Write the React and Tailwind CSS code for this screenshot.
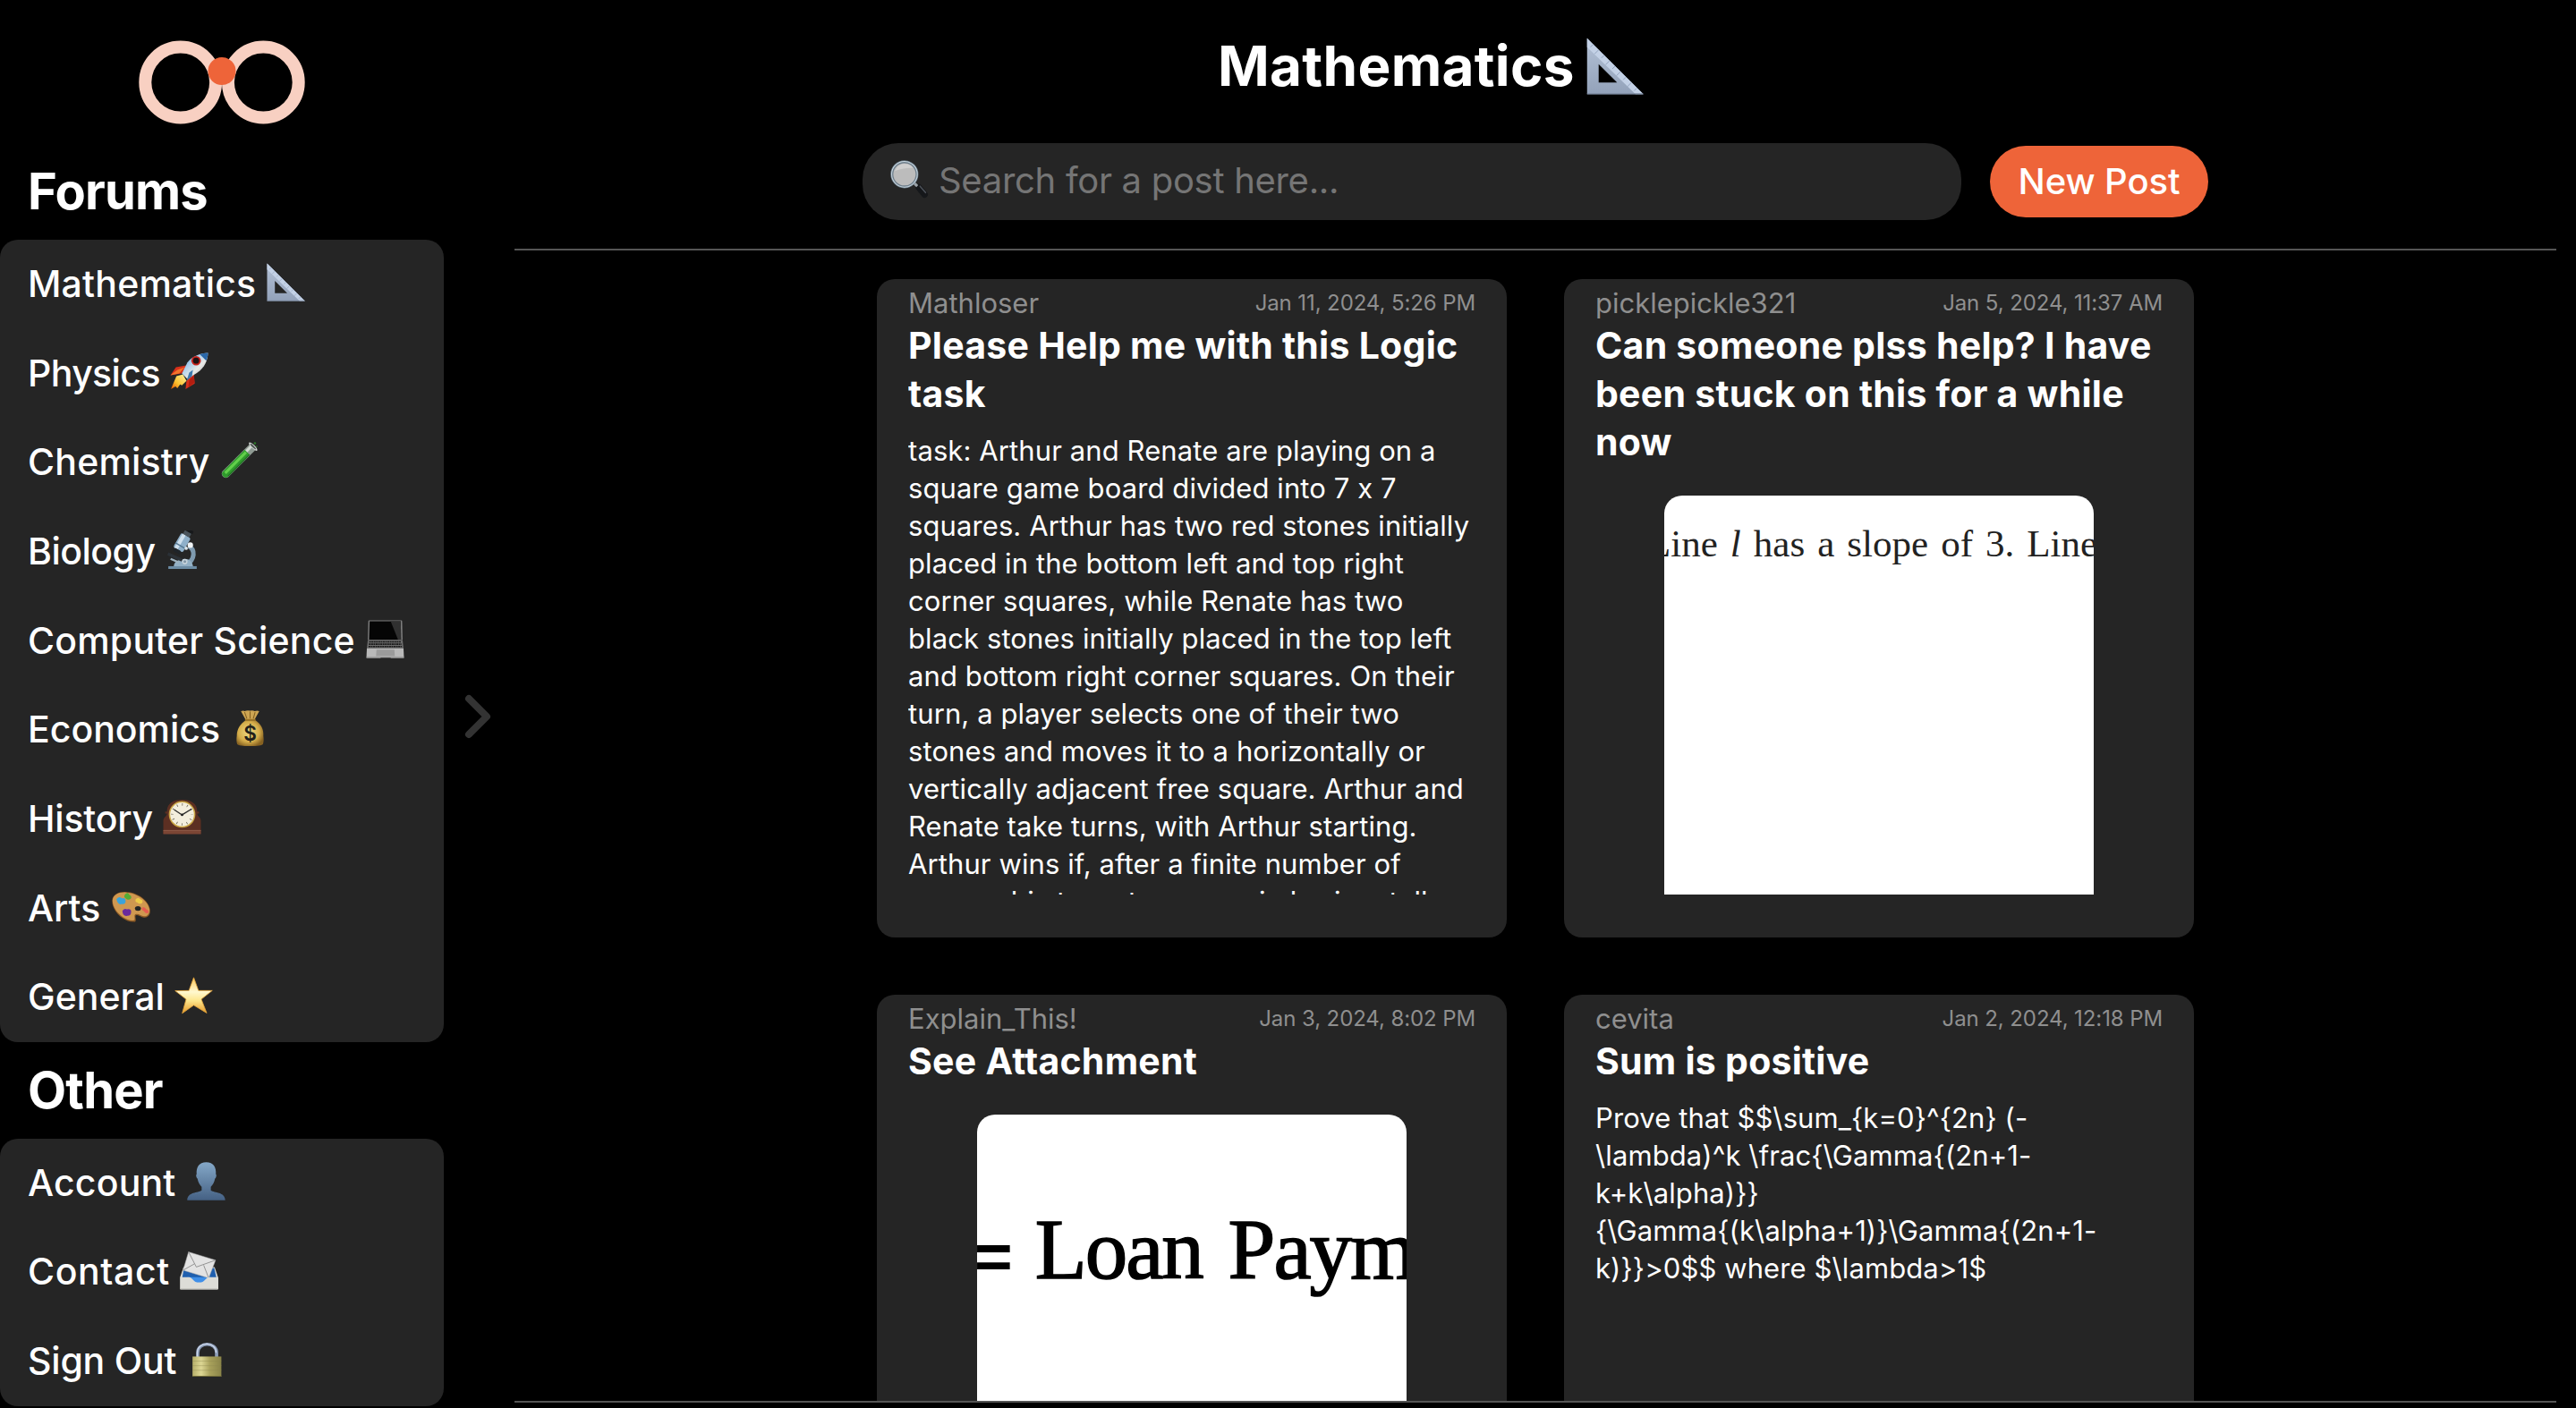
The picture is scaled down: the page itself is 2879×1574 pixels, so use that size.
const FORUMS = [
  { label: "Mathematics", icon: SetSquare, width: "w-[266px] tracking-[0.2px]" },
  { label: "Physics", icon: Rocket, width: "w-[158px] tracking-[-0.6px]" },
  { label: "Chemistry", icon: TestTube, width: "w-[214px] tracking-[0.2px]" },
  { label: "Biology", icon: Microscope, width: "w-[151px] tracking-[-0.5px]" },
  { label: "Computer Science", icon: Laptop, width: "w-[377px] tracking-[0.2px]" },
  { label: "Economics", icon: MoneyBag, width: "w-[226px] tracking-[0px]" },
  { label: "History", icon: MantelClock, width: "w-[150px] tracking-[-0.2px]" },
  { label: "Arts", icon: Palette, width: "w-[93px] tracking-[0px]" },
  { label: "General", icon: Star, width: "w-[163px] tracking-[0px]" },
];

const OTHER = [
  { label: "Account", icon: Bust, width: "w-[177px] tracking-[0.2px]" },
  { label: "Contact", icon: MailTray, width: "w-[169px] tracking-[0.6px]" },
  { label: "Sign Out", icon: Lock, width: "w-[177px] tracking-[-0.2px]" },
];

const LOGIC_TASK = [
  "task: Arthur and Renate are playing on a",
  "square game board divided into 7 x 7",
  "squares. Arthur has two red stones initially",
  "placed in the bottom left and top right",
  "corner squares, while Renate has two",
  "black stones initially placed in the top left",
  "and bottom right corner squares. On their",
  "turn, a player selects one of their two",
  "stones and moves it to a horizontally or",
  "vertically adjacent free square. Arthur and",
  "Renate take turns, with Arthur starting.",
  "Arthur wins if, after a finite number of",
  "moves, his two stones are in horizontally",
].join("\n");

const SUM_TASK = [
  "Prove that $$\\sum_{k=0}^{2n} (-",
  "\\lambda)^k \\frac{\\Gamma{(2n+1-",
  "k+k\\alpha)}}",
  "{\\Gamma{(k\\alpha+1)}\\Gamma{(2n+1-",
  "k)}}>0$$ where $\\lambda>1$",
].join("\n");

function Emoji({ className = "size-[43px]", children }) {
  return (
    <svg viewBox="0 0 42 42" className={`shrink-0 ${className}`} aria-hidden="true">
      {children}
    </svg>
  );
}

function SetSquare({ className }) {
  return (
    <Emoji className={className}>
      <defs>
        <linearGradient id="sq" x1="0" y1="0" x2="0" y2="1">
          <stop offset="0" stopColor="#b3c1d6" />
          <stop offset="1" stopColor="#93a2ba" />
        </linearGradient>
      </defs>
      <path fillRule="evenodd" fill="url(#sq)" d="M.5.5V41.5H41.8ZM9 19.5 22.5 33H9Z" />
      <path fill="#c3d1e6" d="M.5.5 41.8 41.5H36L.5 7Z" />
      <path
        stroke="#8fa0ba"
        strokeWidth=".6"
        d="M5 5l-2 2M9 9l-3 3M13 13l-2 2M17 17l-3 3M21 21l-2 2M25 25l-3 3M29 29l-2 2M33 33l-3 3M37 37l-2 2"
      />
      <path stroke="#7d8aa0" strokeWidth=".8" d="M.5 41.2H41.5" />
    </Emoji>
  );
}

function Rocket() {
  return (
    <Emoji>
      <defs>
        <linearGradient id="rk" x1="0" y1="0" x2="1" y2="1">
          <stop offset="0" stopColor="#2f78c4" />
          <stop offset=".35" stopColor="#a9cdec" />
          <stop offset=".6" stopColor="#e9e9e6" />
          <stop offset="1" stopColor="#7d8a98" />
        </linearGradient>
        <linearGradient id="rf" x1="1" y1="0" x2="0" y2="1">
          <stop offset="0" stopColor="#fff3a0" />
          <stop offset=".6" stopColor="#fbc02d" />
          <stop offset="1" stopColor="#e65100" />
        </linearGradient>
      </defs>
      <path fill="#d8301b" d="M.5 25 6.5 16 19 14 13 23Z" />
      <path fill="#f2742b" d="M.5 25 8 19l8-3-6 7Z" />
      <path fill="#d8301b" d="M17 40l1-9 8-8 1 11Z" />
      <path fill="#b31d10" d="M20 38l1-8 5-5 .8 8Z" />
      <path fill="url(#rf)" d="M1 40 7 26l7-2 4 7-5 5-2-1-3 4-2-2Z" />
      <path fill="url(#rk)" d="M41.5.5C34 .5 24 4 19 11l-6 12 6 6 11-7C38 16 41 9 41.5.5Z" />
      <path fill="#2a67a8" d="M41.5.5C38 .6 35 1.2 32.5 2l7 7C41 6 41.4 3 41.5.5Z" />
      <path fill="#3f79ad" d="M18 31l3-9 4-3-1 7Z" />
      <circle cx="28.5" cy="9" r="5.2" fill="#c8231c" />
      <circle cx="28.5" cy="9" r="3.3" fill="#1d1113" />
    </Emoji>
  );
}

function TestTube() {
  return (
    <Emoji>
      <g transform="translate(-2 1) rotate(45 21 21)">
        <path fill="#8e9a92" d="M16.500-3h9v42a4.500 4.500 0 0 1-9 0Z" />
        <path fill="#d3d9d4" d="M18-2h3v9h-3Z" />
        <path fill="#2f9a2c" d="M17 6h8v33a4 4 0 0 1-8 0Z" />
        <path fill="#62cf4b" d="M18.500 7h3v32h-3Z" />
        <path fill="#1d6b20" d="M24 6h1v33h-1Z" />
        <ellipse cx="21" cy="-3" rx="6.2" ry="2" fill="#c9cecb" />
        <ellipse cx="21" cy="-3" rx="4.2" ry="1" fill="#4d5550" />
      </g>
      <circle cx="38" cy="1.500" r="1.300" fill="#2e7a2b" />
      <circle cx="40" cy="5" r=".8" fill="#2e7a2b" />
    </Emoji>
  );
}

function Microscope() {
  return (
    <Emoji>
      <path fill="none" stroke="#7f9bb0" strokeWidth="5" d="M27 17c8 4 7 15-2 20" />
      <path fill="#6d8da5" d="M5 39h31v3H5Z" />
      <path fill="#93b0c5" d="M11 39c0-5 6-8 12-8 5 0 8 3 9 8Z" />
      <path fill="#2b3137" d="M5 24l16 7-1.500 3L4 27Z" />
      <path fill="#9eb2bf" d="M8 30l9 4-1 2-9-4Z" />
      <g transform="rotate(30 19 14)">
        <rect x="13.500" y="4" width="12" height="18" rx="2" fill="#8fb0ca" />
        <rect x="15" y="4" width="4" height="18" fill="#cfe0ed" />
        <rect x="13.500" y="16" width="12" height="1.500" fill="#557893" />
        <rect x="15.500" y="21.500" width="8" height="4" rx="1" fill="#1f2429" />
        <rect x="15.500" y="-1" width="8" height="5" fill="#4a545c" />
        <rect x="14.500" y="-4" width="10" height="3.500" rx="1" fill="#17191b" />
      </g>
      <circle cx="29" cy="16" r="3" fill="#f0f4f6" />
      <circle cx="24.500" cy="19.500" r="1.800" fill="#dce5ea" />
      <circle cx="23" cy="34" r="3" fill="#c7d3db" />
      <circle cx="23" cy="34" r="1.500" fill="#8298a8" />
    </Emoji>
  );
}

function Laptop() {
  return (
    <Emoji>
      <path fill="#7e7e7e" d="M3.500.5h35q1 0 1 1L40 22H2L2.600 1.500q0-1 .9-1Z" />
      <path fill="#050505" d="M4 1.500h34l.3 20H3.400Z" />
      <path fill="#303030" d="M27 1.500h11l.3 20H35Z" />
      <path fill="#6d6d6d" d="M2 22h38l1 9H1Z" />
      <path stroke="#191919" strokeWidth="1.500" strokeDasharray="2 .5" d="M3.500 24h35M3.200 26.500h35.600M2.800 29h36.400" />
      <path fill="#b9b9b9" d="M1 31h40l.5 10H.5Z" />
      <path fill="#9b9b9b" d="M11.500 32.500h19.500l.5 7H11Z" />
      <path fill="#858585" d="M.5 40.500h41V42H.5Z" />
      <path fill="#4a4a4a" d="M16 41h11v1H16Z" />
    </Emoji>
  );
}

function MoneyBag() {
  return (
    <Emoji>
      <defs>
        <radialGradient id="mb" cx=".45" cy=".45" r=".6">
          <stop offset="0" stopColor="#f0db84" />
          <stop offset=".65" stopColor="#d4ac49" />
          <stop offset="1" stopColor="#876221" />
        </radialGradient>
      </defs>
      <path fill="#cda553" d="M11 2q3-1 4 0 3-1.500 6-.5 3-1 5 .5 3-1 5 0l-5 9H16Z" />
      <path stroke="#84601f" strokeWidth="1" d="M15 3l2.500 7M21 2.500V10M26.500 3l-2 7" />
      <path fill="url(#mb)" d="M16 12h11c6 4 9 10 8.500 17 .5 3 .5 6-.5 9-3 2-9 2-14 2s-11 0-14-2c-1-3-1-6-.5-9C6.500 22 10 16 16 12Z" />
      <path stroke="#9b7427" strokeWidth="2" d="M15.500 11.500h11.500" />
      <text x="21" y="34.500" textAnchor="middle" fontSize="22" fontWeight="600" fontFamily="Inter, sans-serif" fill="#221f1a">
        $
      </text>
    </Emoji>
  );
}

function MantelClock() {
  return (
    <Emoji>
      <path fill="#5c2f22" d="M4.500 15c0-9 7-13 16.500-13s16.500 4 16.500 13l2 0v2h-2c0 3 4 4 4 8v14H.5V25c0-4 4-5 4-8h-2v-2Z" />
      <path fill="#7b4534" d="M.5 35.500h41V39.500H.5Z" />
      <path stroke="#a06a55" strokeWidth=".7" d="M.5 35.500h41" />
      <circle cx="21" cy="18" r="14.500" fill="#c9a544" />
      <circle cx="21" cy="18" r="13" fill="#f3eedd" />
      <circle cx="21" cy="18" r="10.800" fill="none" stroke="#6d675a" strokeWidth="2.600" strokeDasharray=".8 4.855" strokeDashoffset=".4" />
      <path fill="none" stroke="#2b2b2b" strokeWidth="1.300" d="M12.500 13 21 18.500l10.500-6.500" />
      <circle cx="21" cy="18.500" r="1.400" fill="#222" />
    </Emoji>
  );
}

function Palette() {
  return (
    <Emoji>
      <path
        fill="#8d5a25"
        d="M.3 15C.5 8 7 4.800 15 5c13 .5 25 9 26.700 19 .8 6-2.500 9.500-6.700 9-3-.3-5.500-3-8-2.700-3 .5.500 5-1.500 7.200C15 39.500.3 27 .3 15Z"
      />
      <path
        fill="#cf9850"
        d="M.8 14.500C1 8.500 7 5.200 15 5.500c12.500.5 24.500 9 26 18 .6 5.500-2.500 8.500-6 8-3-.4-5.500-3-8.500-2.500-3.500.8-.5 5-2 7C15 37.500.8 26 .8 14.500Z"
      />
      <ellipse cx="28.500" cy="23" rx="3.300" ry="2.600" fill="#252525" />
      <path fill="#3ba3da" d="M5 13q3-4 6-1 4-1 4 3 0 4-4 3-4 2-6-5Z" />
      <path fill="#54ad35" d="M15 7q3-2 4 1 3 1 2 4-3 3-6 0-3-2 0-5Z" />
      <path fill="#edcb48" d="M26 13q3-3 5 0 4 1 2 4-3 2-5-.5-3 0-2-3.500Z" />
      <path fill="#e65c50" d="M33 22q3-1 4.500 2 4 1 2 4-3 1-4.500-2-3-1-2-4Z" />
      <path fill="#6a2a9b" d="M11.500 26q2-4 5-2 5-1 4.500 3 0 4-4 4-5 1-5.500-5Z" />
    </Emoji>
  );
}

function Star() {
  return (
    <Emoji>
      <defs>
        <linearGradient id="st" x1="0" y1="0" x2="0" y2="1">
          <stop offset="0" stopColor="#fbc95a" />
          <stop offset=".4" stopColor="#fff8cf" />
          <stop offset=".65" stopColor="#fde68b" />
          <stop offset="1" stopColor="#e79a2a" />
        </linearGradient>
      </defs>
      <path
        fill="url(#st)"
        stroke="#e2a33b"
        strokeWidth=".8"
        strokeLinejoin="round"
        d="M21 .8 26.200 15H41.300L29.300 24.500 35.200 39.500 21 31 8.500 39.800 12.700 24.500.7 15.200 15.800 15Z"
      />
    </Emoji>
  );
}

function Bust() {
  return (
    <Emoji>
      <defs>
        <linearGradient id="bu" x1="0" y1="0" x2="0" y2="1">
          <stop offset="0" stopColor="#84a8c8" />
          <stop offset="1" stopColor="#456184" />
        </linearGradient>
      </defs>
      <path
        fill="url(#bu)"
        d="M21 .3c8 0 11 5.500 10.500 13 1 1 .5 4-1 5-.6 4-2.500 6.700-4.500 8.700v4c4 3 15.500 1.500 15.700 10.700H.3C.5 32.500 12 34 16 31v-4c-2-2-3.900-4.700-4.500-8.700-1.500-1-2-4-1-5C10 5.800 13 .3 21 .3Z"
      />
    </Emoji>
  );
}

function MailTray() {
  return (
    <Emoji>
      <path fill="#d9d9d5" d="M4 17h34l4 12v12H.3V28Z" />
      <path fill="#1f5fae" d="M4.500 18h33l2.500 11H2.500Z" />
      <path fill="#3f8fe8" d="M8 28h26l-6 6H14Z" />
      <path fill="#e3e3e3" stroke="#a6a6a6" strokeWidth=".5" d="M9.500.5 39 9.500 31.500 29 3.500 20.500Z" />
      <path fill="none" stroke="#8d8d8d" strokeWidth=".9" d="M9.500.5 18 17 39 9.500M3.500 20.500 16 13.500M31.500 29 26 15" />
      <path fill="#dcdcd7" d="M.5 28H10c4 0 4.500 6 11 6s7-6 11-6h9.500v13.500H.5Z" />
      <path fill="#b3b3ae" d="M.5 40.500h41v1H.5Z" />
    </Emoji>
  );
}

function Lock() {
  return (
    <Emoji>
      <defs>
        <linearGradient id="lk" x1="0" y1="0" x2="1" y2="0">
          <stop offset="0" stopColor="#b5ae69" />
          <stop offset=".3" stopColor="#ddd794" />
          <stop offset=".6" stopColor="#a9a25c" />
          <stop offset="1" stopColor="#8a8448" />
        </linearGradient>
      </defs>
      <path fill="none" stroke="#8d9db8" strokeWidth="3.600" d="M11.700 19v-5c0-12.500 20.600-12.500 20.600 0v5" />
      <path fill="none" stroke="#d3def0" strokeWidth="1.200" d="M11.200 19v-5c0-13 20.600-13 20.600 0" />
      <rect x="6" y="18" width="31.500" height="22" fill="url(#lk)" />
      <path stroke="#8f8950" strokeWidth=".4" d="M6 23h31.500M6 28h31.500M6 33h31.500" />
      <path fill="#6f6a38" d="M6 39h31.500v1H6Z" />
    </Emoji>
  );
}

function Magnifier() {
  return (
    <Emoji>
      <path stroke="#15171a" strokeWidth="7" strokeLinecap="round" d="M31 29.500 37.500 37.500" />
      <path stroke="#4c5158" strokeWidth="1.500" strokeLinecap="round" d="M32.500 28.500 38.500 35.500" />
      <path stroke="#9aa2a8" strokeWidth="3" d="M25 24l4.500 4.500" />
      <circle cx="15.500" cy="15.500" r="13.700" fill="#bcbcbc" stroke="#6f7f8c" strokeWidth="3" />
      <circle cx="15.500" cy="15.500" r="14" fill="none" stroke="#c9d8e2" strokeWidth="1" />
      <path fill="#cfcfcf" d="M5 12a11.500 11.500 0 0 1 20-3.500Q14 8 5 12Z" />
    </Emoji>
  );
}

function Logo() {
  return (
    <svg viewBox="0 0 186 94" className="h-[94px] w-[186px]" aria-hidden="true">
      <circle cx="46.700" cy="47" r="39.400" fill="none" stroke="#f8d0c2" strokeWidth="14" />
      <circle cx="139.300" cy="47" r="39.400" fill="none" stroke="#f8d0c2" strokeWidth="14" />
      <circle cx="93" cy="34.500" r="15.500" fill="#ee6439" />
    </svg>
  );
}

function NavHeading({ children }) {
  return (
    <h2 className="flex h-[107.5px] items-center pl-[31px] text-[56px] leading-none font-bold tracking-[-0.8px]">
      {children}
    </h2>
  );
}

function NavPanel({ items }) {
  return (
    <ul className="rounded-[20px] bg-[#252525] pl-[31px]">
      {items.map(({ label, icon: Icon, width }) => (
        <li key={label} className="flex h-[99.7px] items-center pb-[1px]">
          <span className={`mr-px text-[41px] leading-none font-medium whitespace-nowrap ${width}`}>{label}</span>
          <span className="mb-[3px] shrink-0">
            <Icon />
          </span>
        </li>
      ))}
    </ul>
  );
}

function PostCard({ author, date, title, children }) {
  return (
    <article className="h-[736px] overflow-hidden rounded-[20px] bg-[#252525] px-[35px] pt-1.5">
      <div className="flex h-[682px] flex-col overflow-hidden">
        <header className="flex h-[41px] shrink-0 items-center justify-between leading-none text-[#8f8f8f]">
          <span className="text-[31px]">{author}</span>
          <time className="text-[24px] tracking-[-0.1px]">{date}</time>
        </header>
        <h3 className="shrink-0 text-[41px] leading-[54px] font-bold tracking-[0.25px] whitespace-pre">{title}</h3>
        {children}
      </div>
    </article>
  );
}

function PostBody({ children }) {
  return <p className="mt-4 text-[31px] leading-[42px] tracking-[0.1px] whitespace-pre">{children}</p>;
}

function Attachment({ children }) {
  return (
    <div className="mx-auto mt-[33px] h-[480px] w-[480px] shrink-0 overflow-hidden rounded-[20px] bg-white whitespace-nowrap">
      {children}
    </div>
  );
}

export default function App() {
  return (
    <div className="flex h-[1574px] w-[2879px] overflow-hidden bg-black font-['Inter',sans-serif] text-white">
      <aside className="w-[495.5px] shrink-0">
        <div className="flex h-[160.5px] justify-center pt-[45px]">
          <Logo />
        </div>
        <NavHeading>Forums</NavHeading>
        <NavPanel items={FORUMS} />
        <NavHeading>Other</NavHeading>
        <NavPanel items={OTHER} />
      </aside>

      <div className="flex w-[79.5px] shrink-0 items-center justify-center pt-7 pr-0.5">
        <svg viewBox="0 0 30 50" className="h-[50px] w-[30px]" fill="none" stroke="#333333" strokeWidth="8" strokeLinecap="round" strokeLinejoin="round">
          <path d="M5 5 25 25 5 45" />
        </svg>
      </div>

      <main className="w-[2282px] shrink-0">
        <div className="flex h-[160px] items-center pb-3 pl-[786px]">
          <h1 className="w-[412px] text-[62px] leading-none font-bold tracking-[0.3px]">Mathematics</h1>
          <SetSquare className="size-16" />
        </div>

        <div className="flex h-[118px] items-start justify-center gap-8">
          <div className="flex h-[86px] w-[1228px] items-center rounded-[40px] bg-[#252525] pl-[31px]">
            <span className="mb-[5px]">
              <Magnifier />
            </span>
            <span className="pb-0.5 pl-[11px] text-[40px] leading-none tracking-[-0.3px] text-[#757575]">
              Search for a post here...
            </span>
          </div>
          <button className="mt-[3px] h-20 w-[244px] rounded-[40px] bg-[#ee6439] text-[40px] leading-none font-medium tracking-[-0.1px] whitespace-nowrap">
            New Post
          </button>
        </div>

        <section className="grid h-[1290px] grid-cols-[704px_704px] content-start justify-center gap-16 overflow-hidden border-y-2 border-[#555555] pt-8">
          <PostCard author="Mathloser" date="Jan 11, 2024, 5:26 PM" title={"Please Help me with this Logic\ntask"}>
            <PostBody>{LOGIC_TASK}</PostBody>
          </PostCard>

          <PostCard
            author="picklepickle321"
            date="Jan 5, 2024, 11:37 AM"
            title={"Can someone plss help? I have\nbeen stuck on this for a while\nnow"}
          >
            <Attachment>
              <p className="mt-8 ml-[-19px] font-['Liberation_Serif',serif] text-[43px] leading-[44px] text-[#222222] [word-spacing:3.3px]">
                Line <i>l</i> has a slope of 3. Line
              </p>
            </Attachment>
          </PostCard>

          <PostCard author="Explain_This!" date="Jan 3, 2024, 8:02 PM" title="See Attachment">
            <Attachment>
              <p className="mt-[101px] ml-[-3px] flex items-baseline text-black">
                <span className="font-['Liberation_Sans',sans-serif] text-[73px] leading-none font-bold">=</span>
                <span className="pl-[25px] font-['Liberation_Serif',serif] text-[95px] leading-[100px] tracking-[-2px] [-webkit-text-stroke:1.5px_black] [word-spacing:7px]">
                  Loan Paym
                </span>
              </p>
            </Attachment>
          </PostCard>

          <PostCard author="cevita" date="Jan 2, 2024, 12:18 PM" title="Sum is positive">
            <PostBody>{SUM_TASK}</PostBody>
          </PostCard>
        </section>
      </main>
    </div>
  );
}
